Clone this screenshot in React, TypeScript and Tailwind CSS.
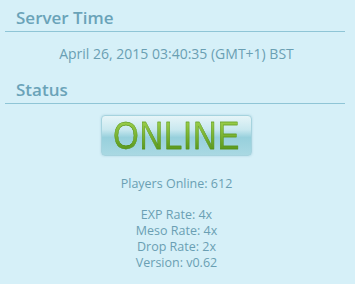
export default function App() {
  const rates = ['EXP Rate: 4x', 'Meso Rate: 4x', 'Drop Rate: 2x', 'Version: v0.62']
  return (
    <div className="w-[355px] h-[284px] bg-[#d6f0f8] font-['Open_Sans',sans-serif] text-[#6a9fb3] pt-[8px]">
      <div className="mx-[5px] w-[340px] border-b border-[#8fc5d6] pl-[11px] pb-[3px]">
        <h2 className="text-[17px] leading-[20px] text-[#6aa3b8] font-semibold">Server Time</h2>
      </div>
      <p className="text-center text-[14px] leading-[16px] mt-[14px] pr-[2px]">April 26, 2015 03:40:35 (GMT+1) BST</p>
      <div className="mx-[5px] w-[340px] border-b border-[#8fc5d6] pl-[11px] pb-[3px] mt-[18px]">
        <h2 className="text-[17px] leading-[20px] text-[#6aa3b8] font-semibold">Status</h2>
      </div>
      <div className="flex justify-center mt-[11px] pr-[2px]">
        <div className="w-[151px] h-[41px] rounded-[4px] border border-[#a6d3de] bg-[linear-gradient(to_bottom,#e6f5f8_0%,#c9e8ef_35%,#97d0dc_55%,#a9d9e3_100%)] shadow-[0_0_2px_rgba(120,180,200,0.5)] flex items-center justify-center">
          <span className="text-[38px] leading-[38px] font-['Liberation_Sans',sans-serif] scale-x-[0.86] text-transparent bg-clip-text bg-[linear-gradient(to_bottom,#a4d650,#4e8e14)] tracking-[1px] [-webkit-text-stroke:0.4px_#4f8c16]">ONLINE</span>
        </div>
      </div>
      <p className="text-center text-[12.5px] leading-[16px] mt-[20px] pr-[2px]">Players Online: 612</p>
      <div className="mt-[15px] flex flex-col items-center text-[12.5px] leading-[16px] pr-[2px]">
        {rates.map(r => (
          <span key={r}>{r}</span>
        ))}
      </div>
    </div>
  )
}
